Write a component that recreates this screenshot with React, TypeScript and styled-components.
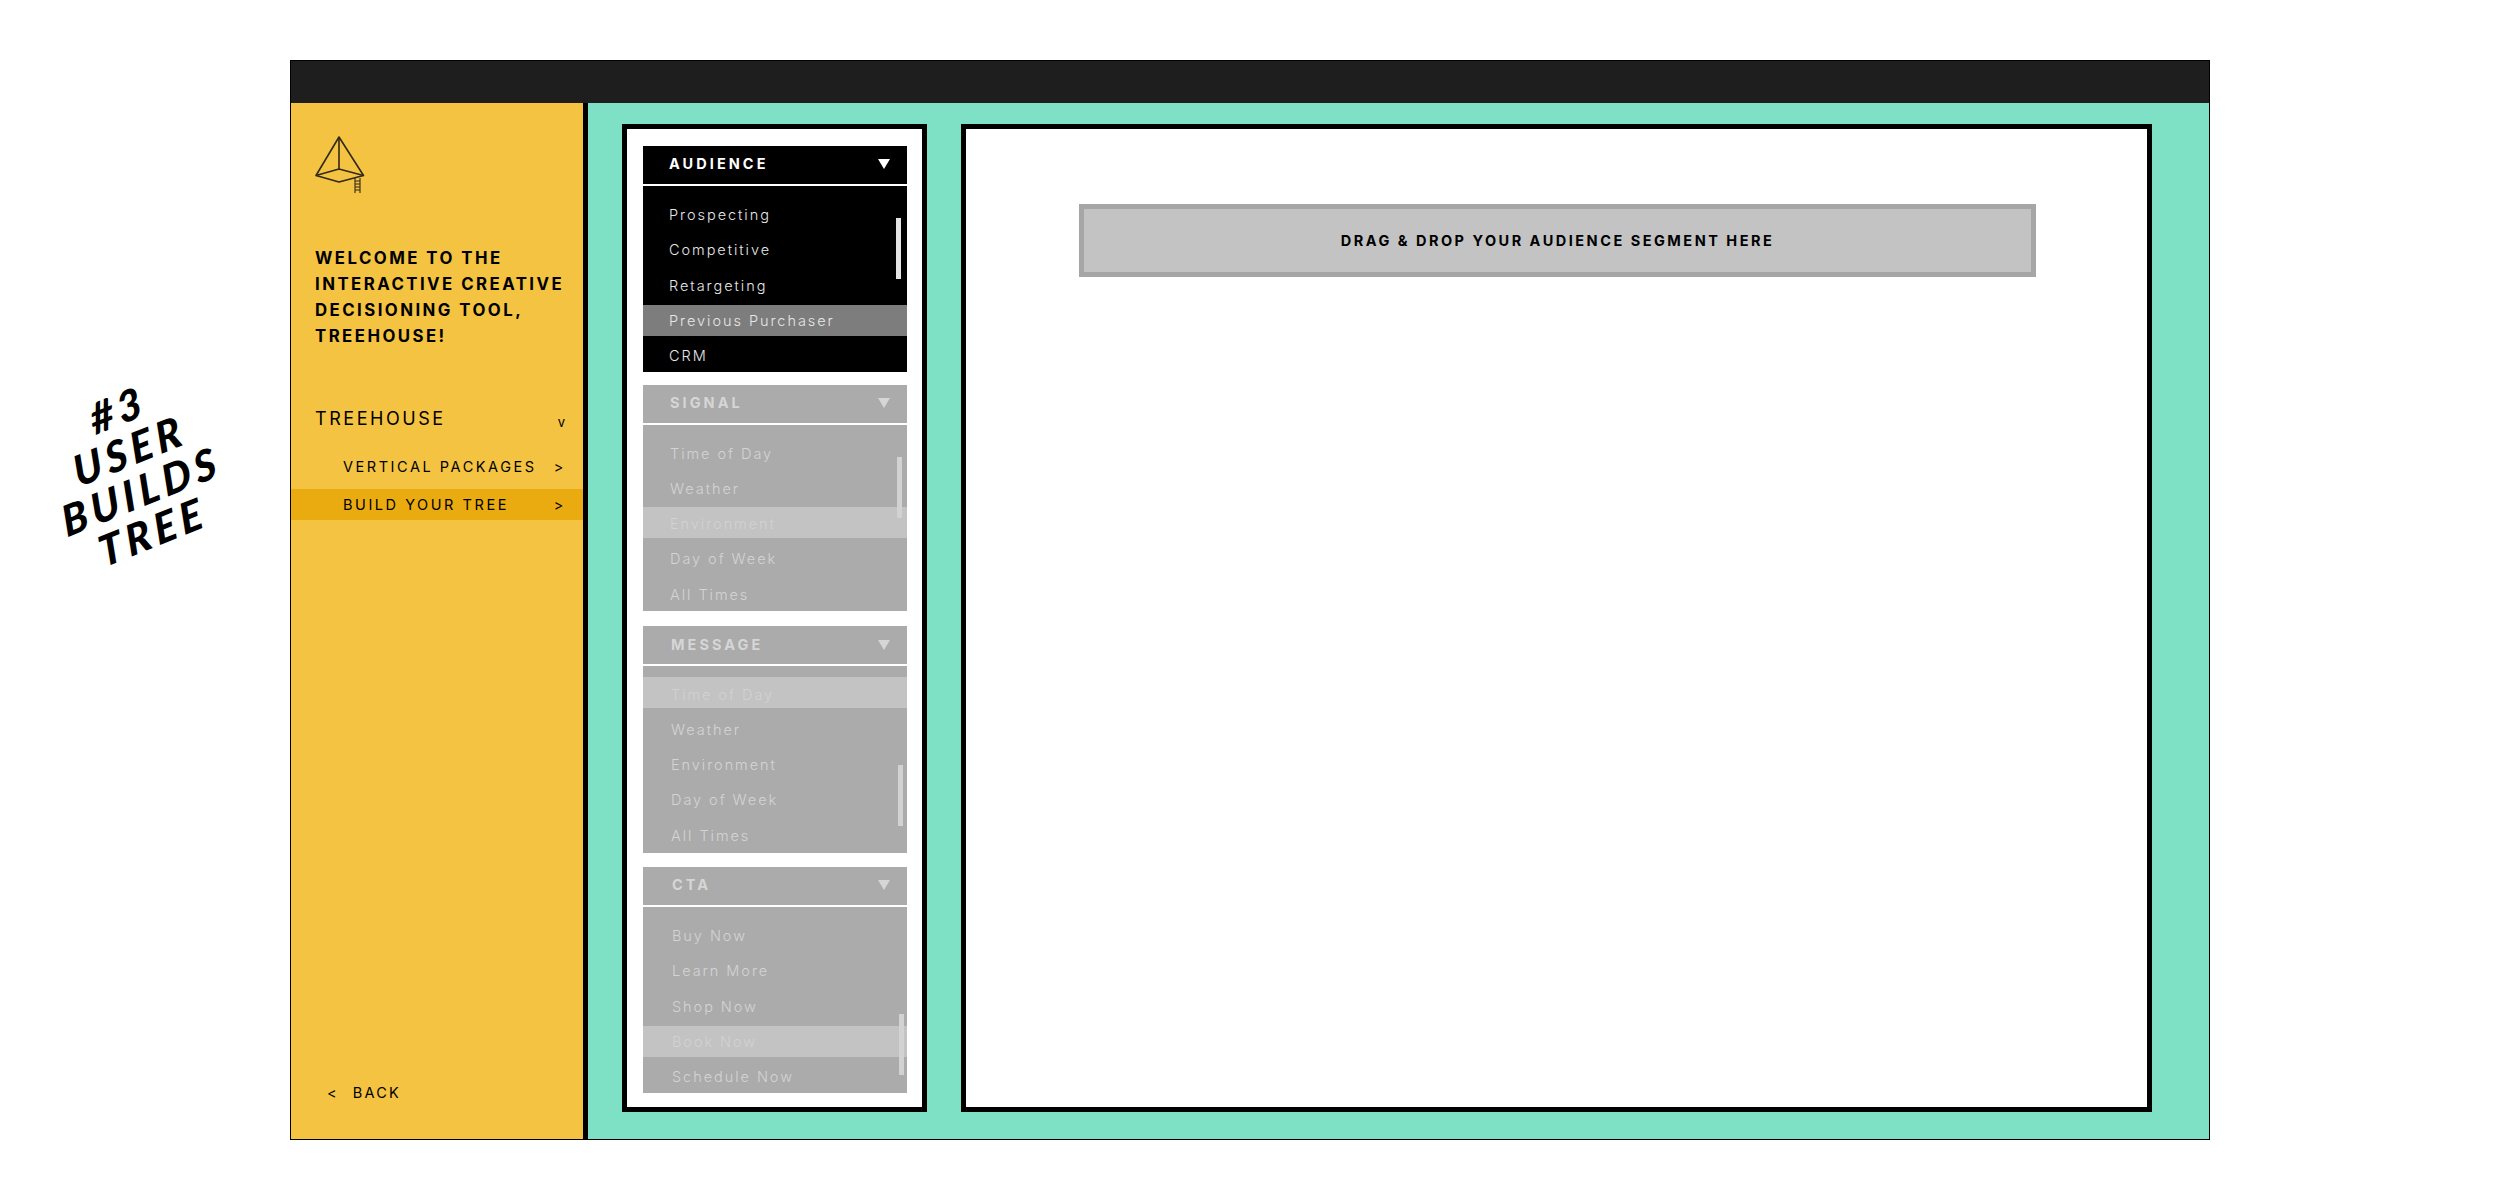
import React from 'react';
import styled, { createGlobalStyle } from 'styled-components';

const FONT = `Inter, "Liberation Sans", sans-serif`;

const Global = createGlobalStyle`
  html, body { margin: 0; padding: 0; background: #fff; }
  body { font-family: ${FONT}; color: #000; }
`;

const Page = styled.div`
  position: relative;
  width: 2500px;
  height: 1200px;
  padding: 60px 0 0 290px;
  box-sizing: border-box;
`;

const Note = styled.div`
  position: absolute;
  left: 35px;
  top: 386px;
  width: 200px;
  transform: rotate(-22deg) skewX(-6deg);
  font-family: Lato, "DejaVu Sans", sans-serif;
  font-weight: 900;
  font-style: italic;
  font-size: 42px;
  line-height: 42px;
  letter-spacing: 5px;
  text-align: center;
  color: #000;
`;

const Frame = styled.div`
  width: 1920px;
  height: 1080px;
  box-sizing: border-box;
  border: 1px solid #000;
  display: flex;
  flex-direction: column;
`;

const TopBar = styled.div`
  height: 42px;
  flex: none;
  background: #1e1e1e;
`;

const Body = styled.div`
  flex: 1;
  display: flex;
  min-height: 0;
`;

const Sidebar = styled.aside`
  width: 292px;
  flex: none;
  box-sizing: content-box;
  border-right: 5px solid #000;
  background: #f4c342;
  display: flex;
  flex-direction: column;
`;

const LogoWrap = styled.div`
  padding: 32px 0 0 24px;
  box-sizing: border-box;
  flex: none;
  height: 142px;
`;

const Welcome = styled.h1`
  margin: 0;
  padding: 0 0 0 24px;
  font-size: 16.8px;
  font-weight: 700;
  line-height: 26px;
  letter-spacing: 2.45px;
  white-space: nowrap;
`;

const NavHead = styled.div`
  margin-top: 57px;
  height: 26px;
  padding: 0 18px 0 24px;
  display: flex;
  justify-content: space-between;
  font-size: 18px;
  font-weight: 400;
  line-height: 26px;
  letter-spacing: 2.55px;
`;

const Caret = styled.span`
  font-size: 13px;
  letter-spacing: 0;
  position: relative;
  top: 3px;
`;

const NavItem = styled.div<{ $active?: boolean }>`
  height: 31px;
  margin-top: ${p => (p.$active ? '7px' : '19px')};
  padding: 0 17px 0 52px;
  display: flex;
  align-items: center;
  justify-content: space-between;
  background: ${p => (p.$active ? '#eaab10' : 'transparent')};
  font-size: 14.5px;
  font-weight: 400;
  letter-spacing: 2.55px;
`;

const Back = styled.div`
  margin-top: auto;
  height: 22px;
  margin-bottom: 36px;
  padding-left: 36px;
  display: flex;
  align-items: center;
  gap: 14px;
  font-size: 14.5px;
  letter-spacing: 2.2px;
`;

const Main = styled.main`
  flex: 1;
  background: #7ee1c6;
  display: flex;
  gap: 34px;
  padding: 21px 0 27px 34px;
  min-width: 0;
`;

const Panel = styled.section`
  width: 305px;
  flex: none;
  box-sizing: border-box;
  border: 5px solid #000;
  background: #fff;
  padding: 17px 15px 0 16px;
  display: flex;
  flex-direction: column;
`;

const Accordion = styled.div<{ $h: number; $mt: number }>`
  position: relative;
  flex: none;
  height: ${p => p.$h}px;
  margin-top: ${p => p.$mt}px;
  display: flex;
  flex-direction: column;
`;

const AccHead = styled.div<{ $active?: boolean; $h: number; $indent: number; $lift: number }>`
  height: ${p => p.$h}px;
  flex: none;
  box-sizing: border-box;
  padding: 0 17px ${p => p.$lift}px ${p => p.$indent}px;
  display: flex;
  align-items: center;
  justify-content: space-between;
  background: ${p => (p.$active ? '#000' : '#ababab')};
  color: ${p => (p.$active ? '#fff' : '#d6d6d6')};
  font-size: 14.5px;
  font-weight: 700;
  letter-spacing: 3.05px;
`;

const Triangle = styled.span<{ $active?: boolean }>`
  width: 0;
  height: 0;
  border-left: 6.5px solid transparent;
  border-right: 6.5px solid transparent;
  border-top: 10px solid ${p => (p.$active ? '#fff' : '#d6d6d6')};
`;

const AccBody = styled.div<{ $active?: boolean; $top: number }>`
  flex: 1;
  margin-top: 2px;
  padding-top: ${p => p.$top}px;
  background: ${p => (p.$active ? '#000' : '#ababab')};
  overflow: hidden;
  display: flex;
  flex-direction: column;
  gap: 4.25px;
`;

const Row = styled.div<{ $active?: boolean; $hl?: boolean; $indent: number; $shift: number }>`
  height: 31px;
  flex: none;
  padding: ${p => p.$shift}px 0 0 ${p => p.$indent}px;
  box-sizing: border-box;
  display: flex;
  align-items: center;
  font-size: 14.5px;
  font-weight: 300;
  letter-spacing: 1.95px;
  background: ${p => (p.$hl ? (p.$active ? '#7d7d7d' : '#c3c3c3') : 'transparent')};
  color: ${p => (p.$active ? '#e6e6e6' : p.$hl ? '#d2d2d2' : '#d4d4d4')};
`;

const Thumb = styled.div<{ $active?: boolean; $x: number; $y: number }>`
  position: absolute;
  left: ${p => p.$x}px;
  top: ${p => p.$y}px;
  width: 5px;
  height: 61px;
  background: ${p => (p.$active ? '#e4e4e4' : '#d2d2d2')};
`;

const Canvas = styled.section`
  width: 1191px;
  flex: none;
  box-sizing: border-box;
  border: 5px solid #000;
  background: #fff;
  padding: 75px 0 0 113px;
`;

const DropZone = styled.div`
  width: 957px;
  height: 73px;
  box-sizing: border-box;
  border: 5px solid #a6a6a6;
  background: #c3c3c3;
  display: flex;
  align-items: center;
  justify-content: center;
  font-size: 14.5px;
  font-weight: 700;
  letter-spacing: 2.5px;
`;

const Logo = () => (
  <svg width="52" height="60" viewBox="315 134 52 60" fill="none" stroke="#33291a" strokeWidth="1.6" strokeLinejoin="round">
    <path d="M339 136 L316 174.5 L339 181 L363.5 174.5 Z" />
    <path d="M339 136 V168 M316 174.5 L339 168 L363.5 174.5" />
    <path d="M355 177 V192 M360 177 V192 M355 180 H360 M355 183 H360 M355 186 H360 M355 189 H360" strokeWidth="1.1" />
  </svg>
);

type Group = {
  title: string; h: number; mt: number; head: number; lift: number; indent: number; top: number; shift: number;
  items: string[]; hl: number; active?: boolean; tx: number; ty: number;
};

const signal = ['Time of Day', 'Weather', 'Environment', 'Day of Week', 'All Times'];

const groups: Group[] = [
  { title: 'AUDIENCE', h: 226, mt: 0, head: 38, lift: 3, indent: 26, top: 13, shift: 0, active: true, hl: 3, tx: 253, ty: 72,
    items: ['Prospecting', 'Competitive', 'Retargeting', 'Previous Purchaser', 'CRM'] },
  { title: 'SIGNAL', h: 226, mt: 13, head: 38, lift: 3, indent: 27, top: 11, shift: 3, hl: 2, tx: 254, ty: 72, items: signal },
  { title: 'MESSAGE', h: 227, mt: 15, head: 38, lift: 1, indent: 28, top: 11, shift: 3, hl: 0, tx: 255, ty: 139, items: signal },
  { title: 'CTA', h: 226, mt: 14, head: 38, lift: 3, indent: 29, top: 13, shift: 0, hl: 3, tx: 256, ty: 147,
    items: ['Buy Now', 'Learn More', 'Shop Now', 'Book Now', 'Schedule Now'] },
];

export default function App() {
  return (
    <Page>
      <Global />
      <Note>#3<br />USER<br />BUILDS<br />TREE</Note>
      <Frame>
        <TopBar />
        <Body>
          <Sidebar>
            <LogoWrap><Logo /></LogoWrap>
            <Welcome>WELCOME TO THE<br />INTERACTIVE CREATIVE<br />DECISIONING TOOL,<br />TREEHOUSE!</Welcome>
            <NavHead>TREEHOUSE<Caret>v</Caret></NavHead>
            <NavItem>VERTICAL PACKAGES<span>&gt;</span></NavItem>
            <NavItem $active>BUILD YOUR TREE<span>&gt;</span></NavItem>
            <Back><span>&lt;</span>BACK</Back>
          </Sidebar>
          <Main>
            <Panel>
              {groups.map(g => (
                <Accordion key={g.title} $h={g.h} $mt={g.mt}>
                  <AccHead $active={g.active} $h={g.head} $indent={g.indent} $lift={g.lift}>
                    {g.title}<Triangle $active={g.active} />
                  </AccHead>
                  <AccBody $active={g.active} $top={g.top}>
                    {g.items.map((it, i) => (
                      <Row key={it} $active={g.active} $hl={i === g.hl} $indent={g.indent} $shift={g.shift}>{it}</Row>
                    ))}
                  </AccBody>
                  <Thumb $active={g.active} $x={g.tx} $y={g.ty} />
                </Accordion>
              ))}
            </Panel>
            <Canvas>
              <DropZone>DRAG &amp; DROP YOUR AUDIENCE SEGMENT HERE</DropZone>
            </Canvas>
          </Main>
        </Body>
      </Frame>
    </Page>
  );
}
